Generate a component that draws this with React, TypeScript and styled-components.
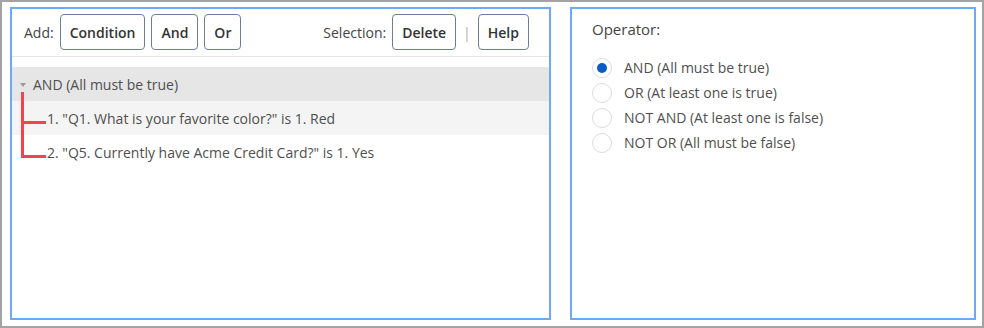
import React, { useState } from 'react';
import styled, { createGlobalStyle } from 'styled-components';

const GlobalStyle = createGlobalStyle`
  * {
    box-sizing: border-box;
  }
  body {
    margin: 0;
    background: #fff;
    font-family: "Open Sans", "Liberation Sans", sans-serif;
  }
`;

const Frame = styled.div`
  width: 984px;
  height: 328px;
  border: 2px solid #a3a3a3;
  padding: 5px 6px 6px 8px;
  display: flex;
  gap: 19px;
  background: #fff;
`;

const Panel = styled.div<{ width: number }>`
  width: ${({ width }) => width}px;
  height: 100%;
  border: 2px solid #6aaaf6;
  display: flex;
  flex-direction: column;
`;

const Toolbar = styled.div`
  display: flex;
  align-items: center;
  padding: 5px 20px 6px 12px;
  border-bottom: 1px solid #e4e4e4;
`;

const Group = styled.div`
  display: flex;
  align-items: center;
  gap: 6px;
`;

const Spacer = styled.div`
  flex: 1;
`;

const Label = styled.span`
  font-size: 14px;
  color: #444;
`;

const Button = styled.button`
  height: 36px;
  padding: 0 9px;
  border: 1px solid #6f7d98;
  border-radius: 4px;
  background: #fff;
  font-family: inherit;
  font-size: 14px;
  font-weight: 600;
  color: #333;
  cursor: pointer;
`;

const Divider = styled.span`
  color: #b0b0b0;
  font-size: 14px;
  margin: 0 1px;
`;

const Tree = styled.div`
  padding-top: 10px;
`;

const GroupRow = styled.div`
  height: 34px;
  display: flex;
  align-items: center;
  background: #e6e6e6;
  padding-left: 8px;
  font-size: 14px;
  color: #4f4f4f;
`;

const Caret = styled.span`
  width: 0;
  height: 0;
  border-left: 3.5px solid transparent;
  border-right: 3.5px solid transparent;
  border-top: 4px solid #9a9a9a;
  margin: 1px 7px 0 0;
`;

const ConditionRow = styled.div<{ shaded: boolean }>`
  position: relative;
  height: 34px;
  display: flex;
  align-items: center;
  padding-left: 35px;
  font-size: 14px;
  color: #4f4f4f;
  background: ${({ shaded }) => (shaded ? '#f4f4f4' : '#fff')};

  &::before {
    content: '';
    position: absolute;
    left: 9px;
    top: -17px;
    width: 22px;
    height: 37px;
    border-left: 3px solid #f5434a;
    border-bottom: 3px solid #f5434a;
  }

  &:first-child::before {
    top: -9px;
    height: 29px;
  }
`;

const OperatorBox = styled.div`
  padding: 10px 20px;
`;

const Title = styled.div`
  font-size: 15px;
  line-height: 20px;
  color: #444;
  margin-bottom: 16px;
`;

const RadioRow = styled.label`
  height: 25px;
  display: flex;
  align-items: center;
  gap: 12px;
  font-size: 14px;
  color: #4f4f4f;
  cursor: pointer;
`;

const RadioCircle = styled.span<{ checked: boolean }>`
  width: 20px;
  height: 20px;
  border-radius: 50%;
  border: 1px solid #dcdcdc;
  background: #fff;
  display: flex;
  align-items: center;
  justify-content: center;

  &::after {
    content: '';
    width: 10px;
    height: 10px;
    border-radius: 50%;
    background: ${({ checked }) => (checked ? '#0b5cc8' : 'transparent')};
  }
`;

const operators = [
  'AND (All must be true)',
  'OR (At least one is true)',
  'NOT AND (At least one is false)',
  'NOT OR (All must be false)',
];

const conditions = [
  '1. "Q1. What is your favorite color?" is 1. Red',
  '2. "Q5. Currently have Acme Credit Card?" is 1. Yes',
];

const App: React.FC = () => {
  const [operator, setOperator] = useState(0);

  return (
    <>
      <GlobalStyle />
      <Frame>
        <Panel width={541}>
          <Toolbar>
            <Group>
              <Label>Add:</Label>
              <Button>Condition</Button>
              <Button>And</Button>
              <Button>Or</Button>
            </Group>
            <Spacer />
            <Group>
              <Label>Selection:</Label>
              <Button>Delete</Button>
              <Divider>|</Divider>
              <Button>Help</Button>
            </Group>
          </Toolbar>
          <Tree>
            <GroupRow>
              <Caret />
              {operators[operator]}
            </GroupRow>
            <div>
              {conditions.map((text, i) => (
                <ConditionRow key={i} shaded={i === 0}>
                  {text}
                </ConditionRow>
              ))}
            </div>
          </Tree>
        </Panel>
        <Panel width={406}>
          <OperatorBox>
            <Title>Operator:</Title>
            {operators.map((op, i) => (
              <RadioRow key={op} onClick={() => setOperator(i)}>
                <RadioCircle checked={i === operator} />
                {op}
              </RadioRow>
            ))}
          </OperatorBox>
        </Panel>
      </Frame>
    </>
  );
};

export default App;
